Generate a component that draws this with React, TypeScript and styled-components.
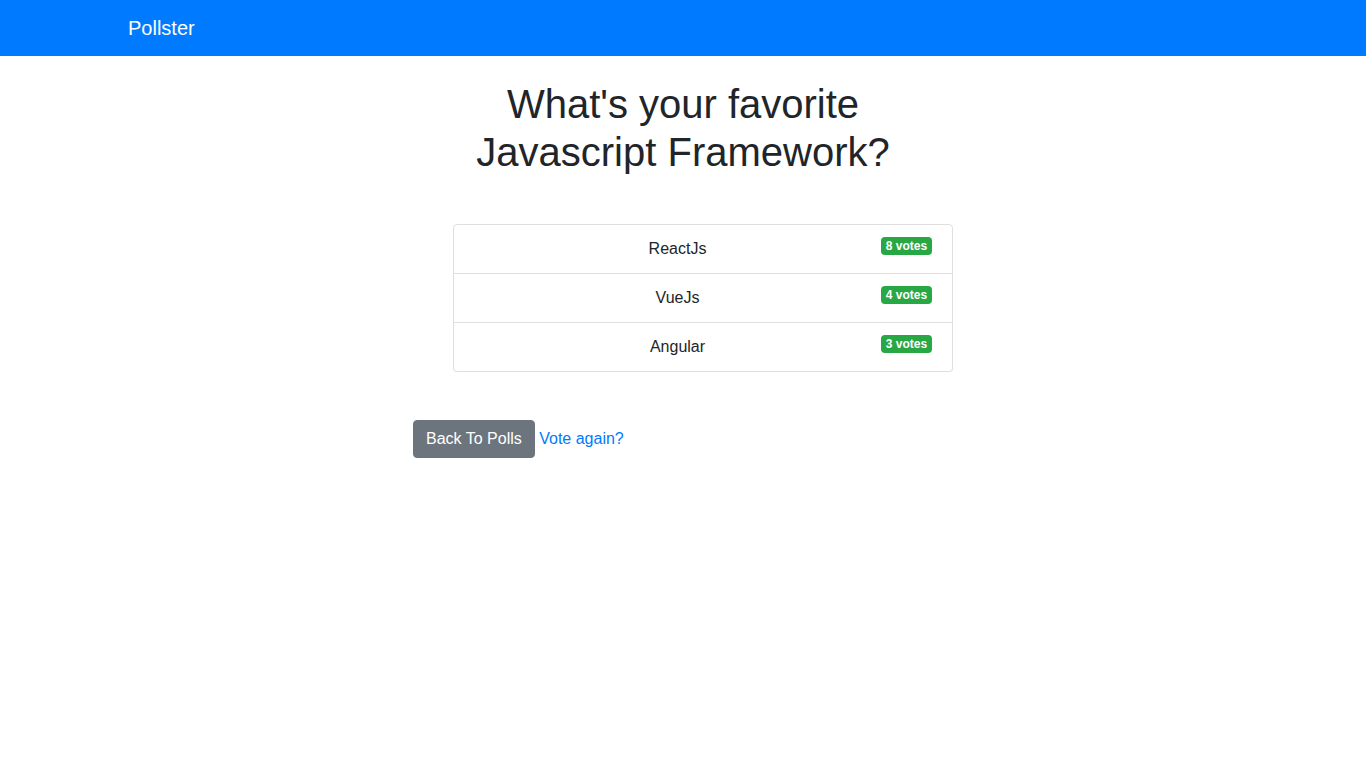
import styled, { createGlobalStyle } from 'styled-components';

const GlobalStyle = createGlobalStyle`
  body {
    margin: 0;
    font-family: "Liberation Sans", Arial, sans-serif;
    font-size: 16px;
    line-height: 1.5;
    color: #212529;
    background: #fff;
  }
`;

const NavBar = styled.nav`
  background: #007bff;
  padding: 8px 16px;
`;

const Container = styled.div`
  max-width: 1140px;
  margin: 0 auto;
  padding: 0 15px;
  box-sizing: border-box;
`;

const Brand = styled.a`
  display: inline-block;
  padding: 5px 0;
  font-size: 20px;
  line-height: 30px;
  color: #fff;
  text-decoration: none;
`;

const Main = styled(Container)`
  margin-top: 24px;
`;

const Column = styled.div`
  width: 540px;
  margin: 0 auto;
`;

const Title = styled.h1`
  margin: 0 0 8px;
  font-size: 40px;
  font-weight: 500;
  line-height: 1.2;
  text-align: center;
`;

const OptionList = styled.ul`
  margin: 48px 0 48px;
  padding-left: 40px;
  list-style: none;
`;

const OptionItem = styled.li`
  padding: 12px 20px;
  border: 1px solid rgba(0, 0, 0, 0.125);
  text-align: center;

  & + & {
    border-top-width: 0;
  }
  &:first-child {
    border-top-left-radius: 4px;
    border-top-right-radius: 4px;
  }
  &:last-child {
    border-bottom-left-radius: 4px;
    border-bottom-right-radius: 4px;
  }
`;

const VoteBadge = styled.span`
  float: right;
  padding: 3px 4.8px;
  font-size: 12px;
  font-weight: 700;
  line-height: 1;
  color: #fff;
  background: #28a745;
  border-radius: 4px;
  white-space: nowrap;
`;

const Actions = styled.div`
  display: block;
`;

const BackButton = styled.button`
  display: inline-block;
  padding: 6px 12px;
  font-family: inherit;
  font-size: 16px;
  line-height: 24px;
  color: #fff;
  background: #6c757d;
  border: 1px solid #6c757d;
  border-radius: 4px;
  cursor: pointer;
`;

const TextLink = styled.a`
  color: #007bff;
  text-decoration: none;
`;

const options = [
  { name: 'ReactJs', votes: 8 },
  { name: 'VueJs', votes: 4 },
  { name: 'Angular', votes: 3 },
];

export default function App() {
  return (
    <>
      <GlobalStyle />
      <NavBar>
        <Container>
          <Brand href="#">Pollster</Brand>
        </Container>
      </NavBar>
      <Main>
        <Column>
          <Title>What's your favorite Javascript Framework?</Title>
          <OptionList>
            {options.map((o) => (
              <OptionItem key={o.name}>
                {o.name}
                <VoteBadge>{o.votes} votes</VoteBadge>
              </OptionItem>
            ))}
          </OptionList>
          <Actions>
            <BackButton type="button">Back To Polls</BackButton>{' '}
            <TextLink href="#">Vote again?</TextLink>
          </Actions>
        </Column>
      </Main>
    </>
  );
}
